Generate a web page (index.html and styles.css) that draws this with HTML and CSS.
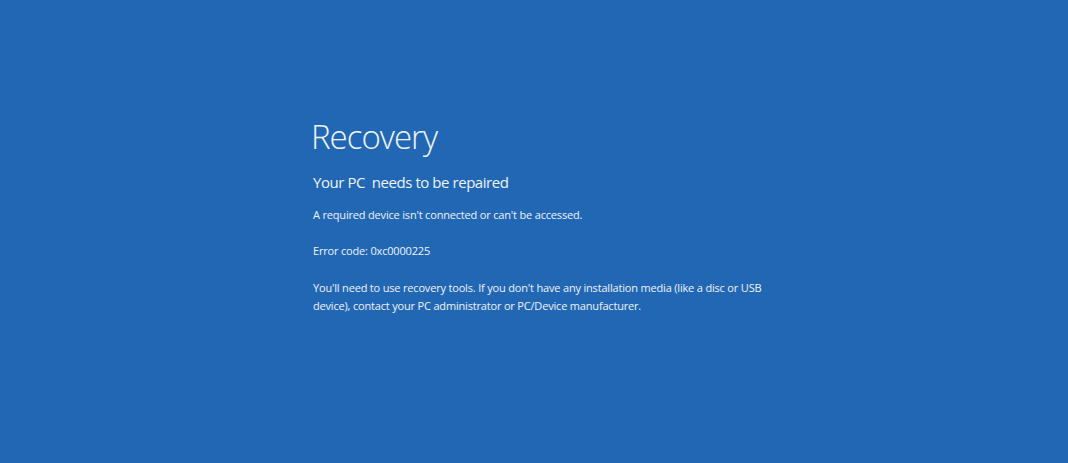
FILE: index.html
```html
<!DOCTYPE html>
<html lang="en">
<head>
  <meta charset="UTF-8">
  <title>Recovery</title>
  <link rel="stylesheet" href="styles.css">
</head>
<body>
  <div class="screen">
    <div class="content">
      <h1>Recovery</h1>
      <h2>Your PC&nbsp; needs to be repaired</h2>
      <p>A required device isn't connected or can't be accessed.</p>
      <p class="code">Error code: 0xc0000225</p>
      <p class="tools">You'll need to use recovery tools. If you don't have any installation media (like a disc or USB device), contact your PC administrator or PC/Device manufacturer.</p>
    </div>
  </div>
</body>
</html>
```

FILE: styles.css
```css
html, body { margin: 0; padding: 0; }
body { background: #2267b3; color: #eef3fa; font-family: "Open Sans", "Noto Sans", sans-serif; }
.screen { width: 1068px; height: 463px; overflow: hidden; }
.content { padding: 115px 0 0 311px; width: 460px; }
h1 { margin: 0; font-size: 33px; font-weight: 300; line-height: 44px; letter-spacing: -1px; }
h2 { margin: 12px 0 0 2px; font-size: 15px; font-weight: 400; line-height: 22px; letter-spacing: -0.45px; }
p { margin: 13px 0 0 2px; font-size: 11px; line-height: 18px; letter-spacing: -0.18px; }
.code { margin-top: 18px; }
.tools { margin-top: 19px; }
```
